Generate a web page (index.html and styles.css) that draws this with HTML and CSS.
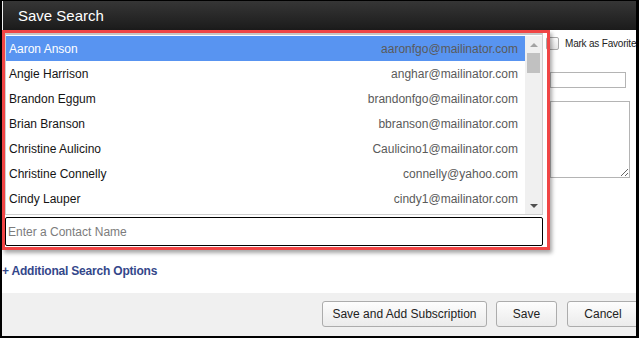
FILE: index.html
```html
<!DOCTYPE html>
<html lang="en">
<head>
    <meta charset="UTF-8">
    <meta name="viewport" content="width=device-width, initial-scale=1.0">
    <title>Save Search</title>
    <link rel="stylesheet" href="styles.css">
</head>
<body>
    <div class="dialog">
        <div class="dialog-header">Save Search</div>
        <div class="dialog-body">
            <div class="form-row">
                <div class="form-main"></div>
                <div class="form-side">
                    <label class="fav"><span class="checkbox"></span>Mark as Favorite</label>
                    <input class="side-input" type="text">
                    <textarea class="side-notes"></textarea>
                </div>
            </div>
            <a class="more-options" href="#">+ Additional Search Options</a>

            <!-- contact autocomplete, open over the form -->
            <div class="contact-picker">
                <div class="contact-list">
                    <ul class="contacts">
                        <li class="selected"><span class="name">Aaron Anson</span><span class="email">aaronfgo@mailinator.com</span></li>
                        <li><span class="name">Angie Harrison</span><span class="email">anghar@mailinator.com</span></li>
                        <li><span class="name">Brandon Eggum</span><span class="email">brandonfgo@mailinator.com</span></li>
                        <li><span class="name">Brian Branson</span><span class="email">bbranson@mailinator.com</span></li>
                        <li><span class="name">Christine Aulicino</span><span class="email">Caulicino1@mailinator.com</span></li>
                        <li><span class="name">Christine Connelly</span><span class="email">connelly@yahoo.com</span></li>
                        <li><span class="name">Cindy Lauper</span><span class="email">cindy1@mailinator.com</span></li>
                    </ul>
                    <div class="scrollbar">
                        <span class="arrow-up"></span>
                        <span class="thumb"></span>
                        <span class="arrow-down"></span>
                    </div>
                </div>
                <input class="contact-input" type="text" placeholder="Enter a Contact Name">
            </div>
            <div class="highlight"></div>
        </div>
        <div class="dialog-footer">
            <button class="btn btn-wide">Save and Add Subscription</button>
            <button class="btn btn-save">Save</button>
            <button class="btn btn-cancel">Cancel</button>
        </div>
    </div>
</body>
</html>
```

FILE: styles.css
```css
html, body {
    margin: 0;
    padding: 0;
}

body {
    background-color: #000;
    font-family: "Liberation Sans", Arial, sans-serif;
    width: 639px;
    height: 338px;
    overflow: hidden;
}

.dialog {
    margin: 1px 3px 2px 2px;
    width: 634px;
    height: 335px;
    background-color: #fff;
    overflow: hidden;
    display: flex;
    flex-direction: column;
}

.dialog-header {
    height: 29px;
    box-sizing: border-box;
    border-left: 1px solid #f2f2f2;
    padding-left: 15px;
    background: linear-gradient(#363636, #1b1b1b);
    color: #fff;
    font-size: 15px;
    line-height: 30px;
}

.dialog-body {
    position: relative;
    height: 263px;
    box-sizing: border-box;
    padding-top: 7px;
}

.form-row {
    display: flex;
}

.form-main {
    width: 544px;
    flex-shrink: 0;
}

.form-side {
    display: flex;
    flex-direction: column;
    align-items: flex-start;
    flex-shrink: 0;
}

.fav {
    display: flex;
    align-items: center;
    gap: 6px;
    height: 13px;
    font-size: 10px;
    letter-spacing: -0.2px;
    color: #222;
    white-space: nowrap;
}

.checkbox {
    width: 13px;
    height: 13px;
    box-sizing: border-box;
    border: 1px solid #a9a9a9;
    border-radius: 2px;
    background: linear-gradient(#fdfdfd, #e6e6e6);
}

.side-input {
    margin: 22px 0 0 4px;
    width: 76px;
    height: 16px;
    box-sizing: border-box;
    border: 1px solid #b4b4b4;
    padding: 0;
}

.side-notes {
    margin: 13px 0 0 4px;
    width: 80px;
    height: 77px;
    box-sizing: border-box;
    border: 1px solid #b4b4b4;
    padding: 0;
}

.more-options {
    display: block;
    margin-top: 86px;
    font-size: 12px;
    font-weight: bold;
    line-height: 14px;
    letter-spacing: -0.2px;
    color: #34478a;
    text-decoration: none;
}

/* autocomplete dropdown */
.contact-picker {
    position: absolute;
    left: 3px;
    top: 3px;
    width: 538px;
    background-color: #fff;
}

.contact-list {
    display: flex;
    height: 182px;
    box-sizing: border-box;
    border: 1px solid #cfcfcf;
    border-top: 2px solid #c6c6c6;
    padding-top: 1px;
    overflow: hidden;
}

.contacts {
    flex: 1;
    list-style: none;
    margin: 0;
    padding: 0;
}

.contacts li {
    display: flex;
    justify-content: space-between;
    align-items: center;
    height: 25px;
    padding: 0 7px 0 3px;
    font-size: 12px;
}

.contacts .name {
    color: #141414;
}

.contacts .email {
    color: #5a5a5a;
}

.contacts li.selected {
    background-color: #5894f1;
}

.contacts li.selected .name {
    color: #fff;
}

.scrollbar {
    position: relative;
    width: 17px;
    background-color: #f0f0f0;
}

.arrow-up,
.arrow-down {
    position: absolute;
    left: 5px;
    width: 0;
    height: 0;
    border-left: 4px solid transparent;
    border-right: 4px solid transparent;
}

.arrow-up {
    top: 7px;
    border-bottom: 4px solid #a3a3a3;
}

.arrow-down {
    bottom: 6px;
    border-top: 4px solid #505050;
}

.thumb {
    position: absolute;
    left: 2px;
    top: 17px;
    width: 13px;
    height: 20px;
    background-color: #c1c1c1;
}

.contact-input {
    display: block;
    margin: 2px 0 0;
    width: 538px;
    height: 29px;
    box-sizing: border-box;
    border: 1px solid #000;
    border-radius: 2px;
    padding: 0 2px;
    font-family: "Liberation Sans", Arial, sans-serif;
    font-size: 12px;
    outline: none;
}

.contact-input::placeholder {
    color: #7c7c7c;
}

/* red annotation frame drawn over the picker */
.highlight {
    position: absolute;
    left: 0;
    top: 0;
    width: 548px;
    height: 220px;
    box-sizing: border-box;
    border: 3px solid #f04545;
    box-shadow: 2px 3px 4px rgba(0, 0, 0, 0.35);
}

.dialog-footer {
    flex: 1;
    display: flex;
    justify-content: flex-end;
    align-items: flex-start;
    gap: 10px;
    margin-right: -3px;
    padding-top: 8px;
    background-color: #f0f0f0;
}

.btn {
    height: 26px;
    border: 1px solid #acacac;
    border-radius: 3px;
    background: linear-gradient(#fdfdfd, #ebebeb);
    font-family: "Liberation Sans", Arial, sans-serif;
    font-size: 12px;
    color: #222;
    padding: 0;
}

.btn-wide {
    width: 165px;
    margin-right: -1px;
}

.btn-save {
    width: 61px;
}

.btn-cancel {
    width: 72px;
}
```
